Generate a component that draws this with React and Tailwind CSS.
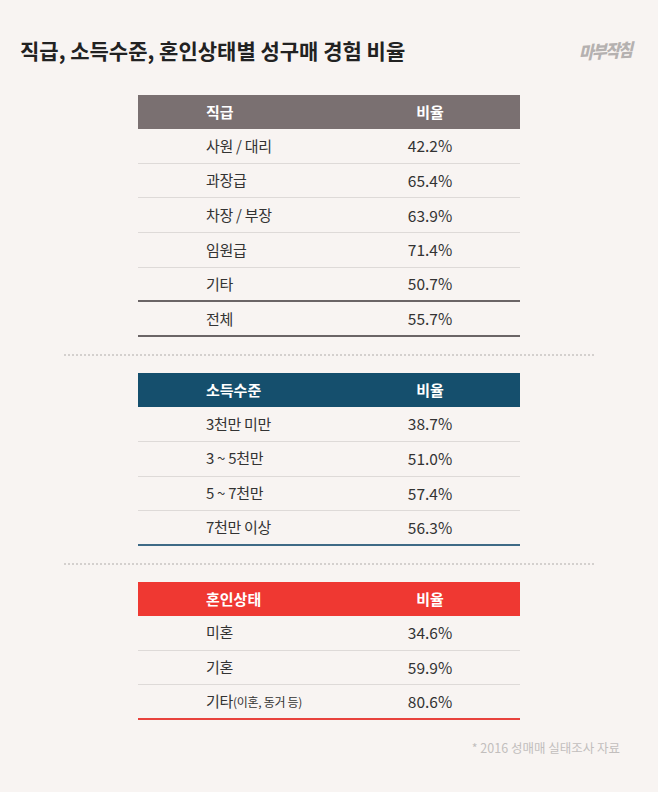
import React from "react";

const font = { fontFamily: '"Noto Sans CJK KR", "Noto Sans", sans-serif' };

const tables = [
  {
    title: "직급",
    head: "bg-[#7a7071]",
    end: "border-[#6b6566]",
    rows: [
      ["사원 / 대리", "42.2%"],
      ["과장급", "65.4%"],
      ["차장 / 부장", "63.9%"],
      ["임원급", "71.4%"],
      ["기타", "50.7%"],
    ],
    total: ["전체", "55.7%"],
  },
  {
    title: "소득수준",
    head: "bg-[#154f6d]",
    end: "border-[#3e6a86]",
    rows: [
      ["3천만 미만", "38.7%"],
      ["3 ~ 5천만", "51.0%"],
      ["5 ~ 7천만", "57.4%"],
      ["7천만 이상", "56.3%"],
    ],
  },
  {
    title: "혼인상태",
    head: "bg-[#ef3832]",
    end: "border-[#e8423d]",
    rows: [
      ["미혼", "34.6%"],
      ["기혼", "59.9%"],
      [
        <>
          기타<span className="text-[12px]">(이혼, 동거 등)</span>
        </>,
        "80.6%",
      ],
    ],
  },
];

const Row = ({ label, value, className }) => (
  <div className={`grid grid-cols-[202px_180px] h-[34.7px] items-center text-[15px] text-[#333] tracking-[-0.02em] ${className}`}>
    <div className="pl-[68px]">{label}</div>
    <div className="text-center text-[15.5px] tracking-normal">{value}</div>
  </div>
);

const Table = ({ t }) => (
  <div className="w-[382px] mx-auto">
    <div className={`grid grid-cols-[202px_180px] h-[34px] items-center text-[15px] font-bold text-white ${t.head}`}>
      <div className="pl-[68px]">{t.title}</div>
      <div className="text-center">비율</div>
    </div>
    {t.rows.map((r, i) => {
      const last = i === t.rows.length - 1;
      let cls = "border-b border-[#dedad8]";
      if (last && t.total) cls = "border-b-2 border-[#6b6566]";
      else if (last) cls = `border-b-2 ${t.end}`;
      return <Row key={i} label={r[0]} value={r[1]} className={cls} />;
    })}
    {t.total && (
      <Row label={t.total[0]} value={t.total[1]} className={`border-b-2 ${t.end}`} />
    )}
  </div>
);

const Dots = () => (
  <div className="mx-[64px] my-[17px] border-t-2 border-dotted border-[#d4d0ce]" />
);

export default function App() {
  return (
    <div className="w-[658px] h-[792px] bg-[#f8f4f2] overflow-hidden" style={font}>
      <div className="flex items-center justify-between pl-[20px] pr-[27px] pt-[36px]">
        <h1 className="text-[21px] font-bold text-[#222] leading-[28px]">
          직급, 소득수준, 혼인상태별 성구매 경험 비율
        </h1>
        <div className="text-[16px] font-black text-[#b5b1b0] tracking-[-0.1em] -skew-y-3 scale-y-110 italic">
          마부작침
        </div>
      </div>
      <div className="mt-[31px]">
        <Table t={tables[0]} />
        <Dots />
        <Table t={tables[1]} />
        <Dots />
        <Table t={tables[2]} />
      </div>
      <div className="text-right pr-[38px] mt-[19px] text-[12.5px] text-[#c2bebd]">
        * 2016 성매매 실태조사 자료
      </div>
    </div>
  );
}
